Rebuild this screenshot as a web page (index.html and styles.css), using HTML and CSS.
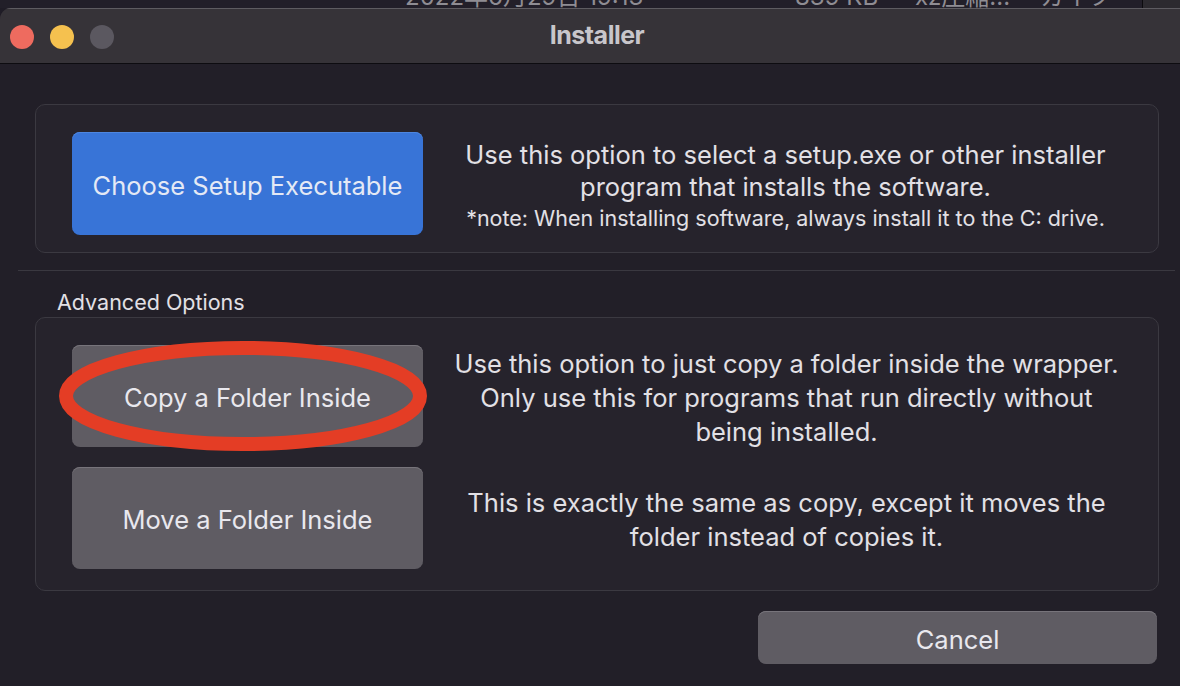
FILE: index.html
```html
<!DOCTYPE html>
<html>
<head>
<meta charset="utf-8">
<link rel="stylesheet" href="styles.css">
</head>
<body>
<div class="behind">
  <div class="behind-row">
    <span class="b-date">2022年6月29日 19:13</span>
    <span class="b-size">839 KB</span>
    <span class="b-kind">xz圧縮...</span>
    <span class="b-tag">カイフ</span>
  </div>
  <div class="behind-side"></div>
</div>
<div class="window">
  <div class="titlebar">
    <div class="lights">
      <span class="light red"></span>
      <span class="light yellow"></span>
      <span class="light gray"></span>
    </div>
    <div class="title">Installer</div>
    <div></div>
  </div>
  <div class="content">
    <div class="box box-main">
      <div class="row">
        <button class="btn btn-blue">Choose Setup Executable</button>
        <div class="desc desc-main">
          <p class="line">Use this option to select a setup.exe or other installer</p>
          <p class="line">program that installs the software.</p>
          <p class="note">*note: When installing software, always install it to the C: drive.</p>
        </div>
      </div>
    </div>
    <div class="sep"></div>
    <div class="label">Advanced Options</div>
    <div class="box box-adv">
      <div class="row">
        <div class="btn-wrap">
          <button class="btn btn-gray">Copy a Folder Inside</button>
          <svg class="circle" width="386" height="126" viewBox="0 0 386 126">
            <ellipse cx="186" cy="60" rx="177" ry="48" fill="none" stroke="#e43d25" stroke-width="14"/>
          </svg>
        </div>
        <div class="desc desc-adv">
          <p class="line2">Use this option to just copy a folder inside the wrapper.</p>
          <p class="line2">Only use this for programs that run directly without</p>
          <p class="line2">being installed.</p>
        </div>
      </div>
      <div class="row">
        <button class="btn btn-gray">Move a Folder Inside</button>
        <div class="desc desc-adv">
          <p class="line2">This is exactly the same as copy, except it moves the</p>
          <p class="line2">folder instead of copies it.</p>
        </div>
      </div>
    </div>
    <div class="footer">
      <button class="btn btn-gray btn-cancel">Cancel</button>
    </div>
  </div>
</div>
</body>
</html>
```
FILE: styles.css
```css
* { box-sizing: border-box; }
html, body {
  margin: 0;
  padding: 0;
  width: 1180px;
  height: 686px;
  overflow: hidden;
  background: #1f1c26;
  font-family: Inter, "Noto Sans CJK JP", sans-serif;
}
.behind {
  height: 8px;
  overflow: hidden;
  display: flex;
  background: #221f29;
}
.behind-row {
  flex: 1;
  display: flex;
  margin-top: -15px;
  height: 24px;
  font-size: 24px;
  line-height: 24px;
  color: #8f8d93;
  white-space: nowrap;
  padding-left: 405px;
}
.b-date { width: 390px; }
.b-size { width: 120px; }
.b-kind { width: 125px; }
.behind-side {
  width: 38px;
  border-left: 1px solid #0c0b0e;
  background: #2c2a2f;
}
.window {
  height: 678px;
  background: #221f28;
  border-top-left-radius: 11px;
  overflow: hidden;
}
.titlebar {
  height: 56px;
  background: #363338;
  border-top: 1px solid #5e5c61;
  border-bottom: 1px solid #0d0c10;
  display: grid;
  grid-template-columns: 1fr auto 1fr;
  align-items: center;
}
.lights {
  display: flex;
  gap: 16px;
  padding-left: 10px;
  padding-top: 1px;
}
.light {
  width: 24px;
  height: 24px;
  border-radius: 50%;
  display: block;
}
.red { background: #ee6b5f; }
.yellow { background: #f5c14f; }
.gray { background: #5b5860; }
.title {
  font-weight: 700;
  font-size: 25px;
  color: #c8c6cb;
  padding-left: 14px;
  letter-spacing: -0.5px;
  margin-top: -2px;
}
.content {
  padding: 40px 5px 0 18px;
  display: flex;
  flex-direction: column;
}
.box {
  margin-left: 17px;
  margin-right: 16px;
  border: 1px solid #3b3941;
  border-radius: 10px;
  background: #26232c;
}
.box-main {
  height: 149px;
  padding: 27px 0 0 36px;
}
.row {
  display: flex;
  align-items: center;
}
.btn {
  width: 351px;
  height: 103px;
  border: none;
  border-radius: 8px;
  font-family: Inter, sans-serif;
  font-size: 25.5px;
  color: #e9e8ee;
  padding: 3px 0 0 0;
  flex: none;
}
.btn-blue {
  background: #3874d7;
  box-shadow: inset 0 1px 0 #4d86e0;
  color: #e4e9f5;
}
.btn-gray {
  background: #5f5c63;
  box-shadow: inset 0 1px 0 #77747b;
  height: 102px;
}
.desc {
  flex: 1;
  text-align: center;
  color: #e2e0e5;
  padding-right: 10px;
}
.desc-main {
  padding-top: 4px;
}
.desc p { margin: 0; white-space: nowrap; }
.line {
  font-size: 25.5px;
  line-height: 32px;
}
.note {
  font-size: 21.5px;
  line-height: 30px;
}
.sep {
  height: 1px;
  background: #3a3840;
  margin-top: 17px;
  margin-right: 0;
}
.label {
  margin-left: 39px;
  margin-top: 19px;
  font-size: 21.5px;
  line-height: 24px;
  color: #e2e0e5;
}
.box-adv {
  margin-top: 3px;
  height: 274px;
  padding: 27px 0 0 36px;
  display: flex;
  flex-direction: column;
  gap: 20px;
}
.btn-wrap {
  position: relative;
  width: 351px;
  height: 102px;
  flex: none;
}
.circle {
  position: absolute;
  left: -15px;
  top: -9px;
  pointer-events: none;
}
.desc-adv {
  padding-right: 8px;
  margin-top: 2px;
  margin-bottom: -2px;
}
.line2 {
  font-size: 25.5px;
  line-height: 34px;
}
.footer {
  display: flex;
  justify-content: flex-end;
  padding-right: 18px;
  margin-top: 20px;
}
.btn-cancel {
  width: 399px;
  height: 53px;
}
```
